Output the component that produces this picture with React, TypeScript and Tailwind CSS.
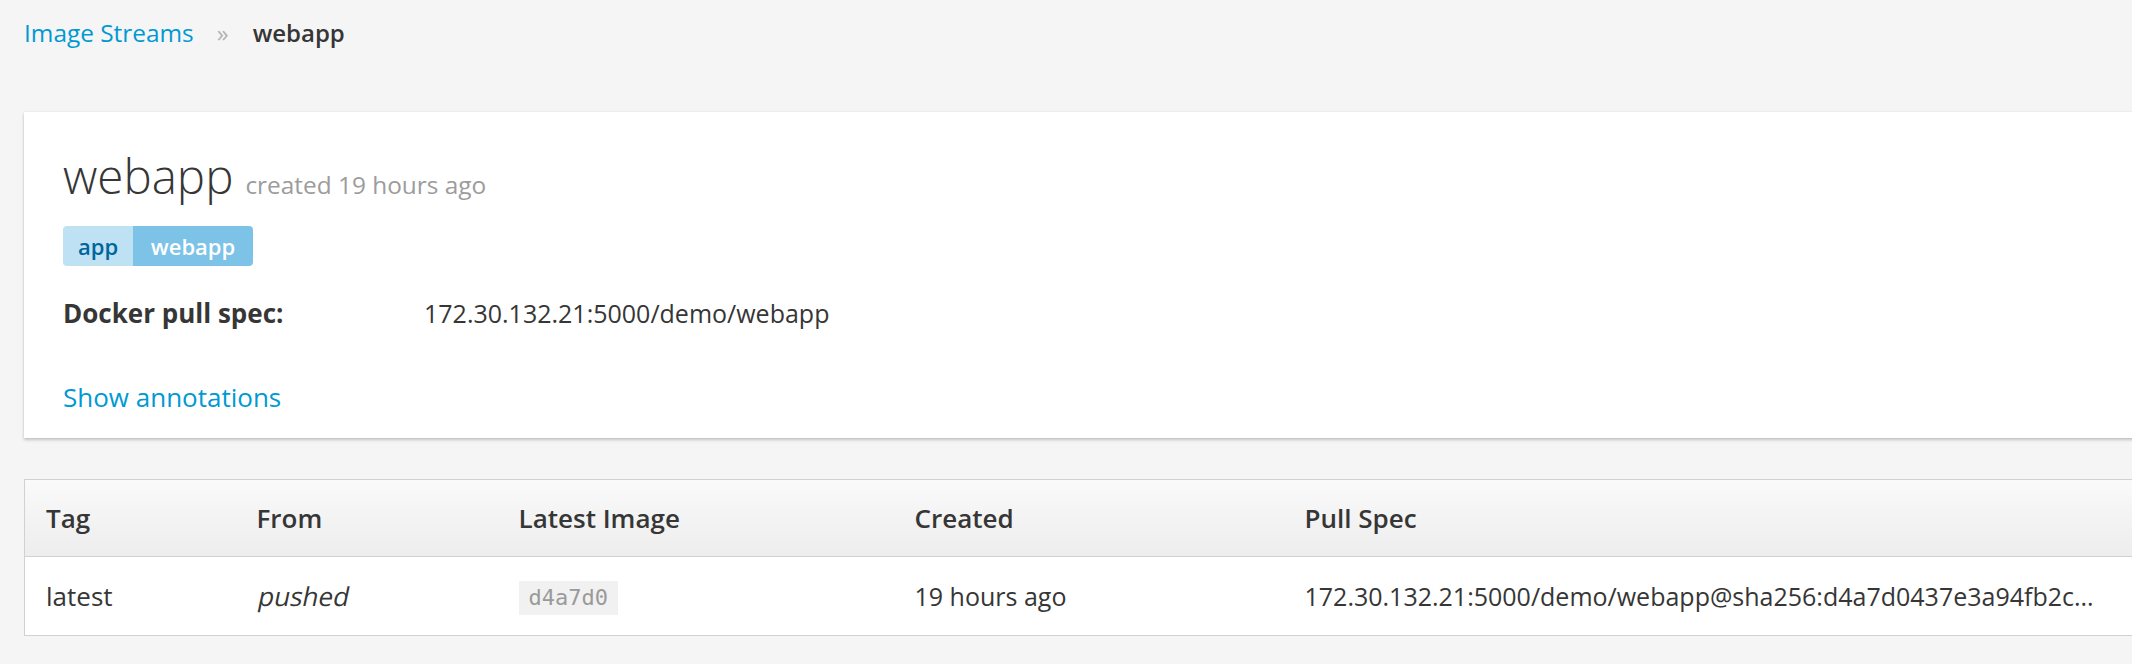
export default function App() {
  const cols = [211, 262, 396, 390];
  return (
    <div className="min-h-[664px] w-full overflow-hidden bg-[#f5f5f5] text-[#363636] font-['Open_Sans',sans-serif]">
      <div className="pl-[24px] pt-[15px]">
        <nav className="flex h-[36px] items-center text-[24px] leading-[36px]">
          <a className="text-[#0099d3] text-[24.4px]">Image Streams</a>
          <span className="ml-[23px] mr-[24px] text-[#b3b3b3]">»</span>
          <span className="font-semibold text-[#363636]">webapp</span>
        </nav>

        <div className="mt-[61px] w-[2200px] bg-white pb-[23px] pl-[39px] pt-[38px] shadow-[0_2px_3px_rgba(3,3,3,0.2),0_0_2px_rgba(0,0,0,0.08)]">
          <h1 className="h-[52px] text-[47.5px] font-light leading-[52px] text-[#363636]">
            webapp
            <span className="ml-[12px] text-[24.4px] font-normal text-[#9c9c9c]">created 19 hours ago</span>
          </h1>

          <div className="mt-[24px] flex h-[40px] w-fit overflow-hidden rounded-[4px] text-[22px] font-semibold leading-[40px]">
            <span className="w-[70px] bg-[#bee1f4] text-center text-[#00659c]">app</span>
            <span className="w-[120px] bg-[#7dc3e8] text-center text-white">webapp</span>
          </div>

          <div className="mt-[29px] flex leading-[36px]">
            <div className="w-[361px] text-[26px] font-bold">Docker pull spec:</div>
            <div className="text-[25px]">172.30.132.21:5000/demo/webapp</div>
          </div>

          <div className="mt-[48px] text-[26px] leading-[36px]">
            <a className="text-[#0099d3]">Show annotations</a>
          </div>
        </div>

        <table className="mt-[41px] w-[2200px] table-fixed border-collapse border border-[#d1d1d1] text-[26px] leading-[36px]">
          <colgroup>
            {cols.map((w, i) => (
              <col key={i} style={{ width: w }} />
            ))}
            <col />
          </colgroup>
          <thead>
            <tr className="bg-linear-to-b from-[#fafafa] to-[#ededed] border-b border-[#d1d1d1]">
              <th className="py-[20px] pl-[21px] text-left font-semibold">Tag</th>
              <th className="py-[20px] pl-[21px] text-left font-semibold">From</th>
              <th className="py-[20px] pl-[21px] text-left font-semibold">Latest Image</th>
              <th className="py-[20px] pl-[21px] text-left font-semibold">Created</th>
              <th className="py-[20px] pl-[21px] text-left font-semibold">Pull Spec</th>
            </tr>
          </thead>
          <tbody>
            <tr className="bg-white">
              <td className="py-[20px] pl-[21px]">latest</td>
              <td className="py-[20px] pl-[23px]">
                <span className="inline-block -skew-x-12">pushed</span>
              </td>
              <td className="py-[20px] pl-[21px]">
                <code className="inline-block bg-[#f1f1f1] px-[10px] py-[4px] text-[22px] leading-[26px] text-[#9a9a9a] font-['DejaVu_Sans_Mono',monospace]">
                  d4a7d0
                </code>
              </td>
              <td className="py-[20px] pl-[21px] text-[25px]">19 hours ago</td>
              <td className="py-[20px] pl-[21px] whitespace-nowrap text-[25px]">
                172.30.132.21:5000/demo/webapp@sha256:d4a7d0437e3a94fb2c...
              </td>
            </tr>
          </tbody>
        </table>
      </div>
    </div>
  );
}
